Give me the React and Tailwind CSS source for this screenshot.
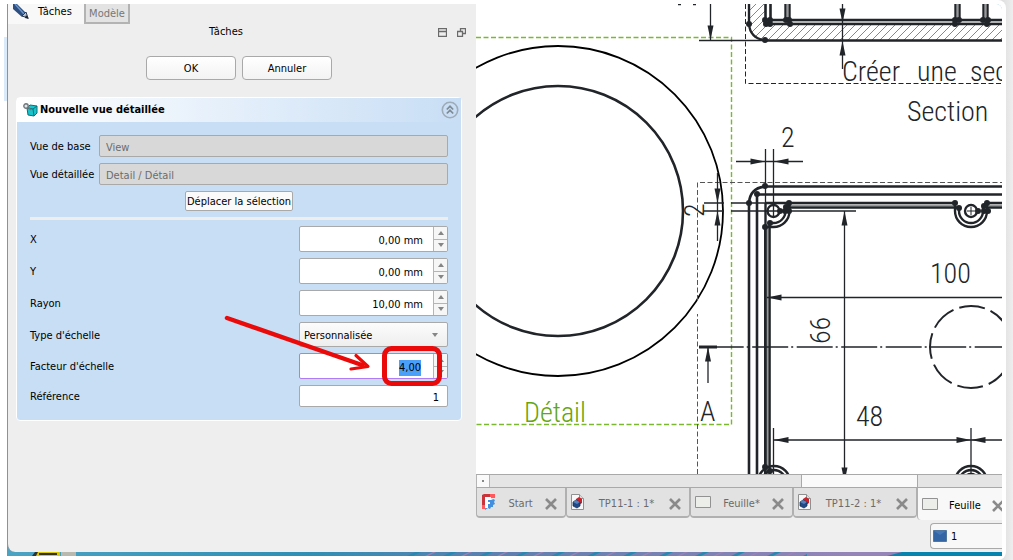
import React, { useEffect, useRef, useState } from "react";

const INK = "#212529";

const PencilIcon = () => (
  <svg width="18" height="18" viewBox="0 0 18 18" aria-hidden="true">
    <path d="M1 0 5 0 14 9 10 13 1 5Z" fill="#2d4f80" />
    <path d="M3 0 12 10" stroke="#6d94c8" strokeWidth="1.500" />
    <path d="M14 8 16 14 10 12Z" fill="#b9c3cf" stroke="#2a3950" />
    <path d="M14 11 17 15 13 14Z" fill="#16202e" />
  </svg>
);

const DetailCubeIcon = () => (
  <svg width="15" height="14" viewBox="0 0 15 14" aria-hidden="true">
    <path d="M4 5 7 2 14 3 14 10 11 13 5 12Z" fill="#16c4cc" stroke="#0b6f78" />
    <path d="M4 5 10 6 14 3M10 6 11 13" fill="none" stroke="#0b6f78" />
    <circle cx="3" cy="3" r="2.200" fill="#dfe6ea" stroke="#6f777c" strokeWidth="1.400" />
    <path d="M5 4 8 7" stroke="#6f777c" strokeWidth="1.500" />
  </svg>
);

const CollapseIcon = () => (
  <svg width="18" height="18" viewBox="0 0 18 18" fill="none" aria-hidden="true">
    <circle cx="9" cy="9" r="7.700" stroke="#9eabb8" strokeWidth="1.600" />
    <path d="M5.800 8.500 9 5.300l3.200 3.200M5.800 12.500 9 9.300l3.200 3.200" stroke="#7e8a96" strokeWidth="1.700" />
  </svg>
);

const DockIcon = () => (
  <svg width="9" height="9" viewBox="0 0 9 9" fill="none" stroke="#6a6a6a" strokeWidth="1.300" aria-hidden="true">
    <path d="M.5 .5h8v8h-8zM1 3.500h7" />
  </svg>
);

const FloatIcon = () => (
  <svg width="9" height="9" viewBox="0 0 9 9" fill="none" stroke="#6a6a6a" strokeWidth="1.300" aria-hidden="true">
    <path d="M.5 3.500h5v5h-5zM3.500 3V.5h5v5H6" />
  </svg>
);

const FreeCadIcon = () => (
  <svg width="15" height="16" viewBox="0 0 15 16" aria-hidden="true">
    <path d="M6 6h5l1-1 2 1-1 2 1 2-2 1 0 2-2 0-1 2-2-1-3 2V7z" fill="#418fde" />
    <path d="M1 1 3 0h6v4H5v11H1z" fill="#cb333b" />
    <path d="M9 0h5v4H9z" fill="#ff585d" />
    <path d="M1 11h4v4H1z" fill="#ff585d" />
    <path d="M4 3h6v3H7v2h2v2H7v4H4z" fill="#fff" />
  </svg>
);

const PartIcon = () => (
  <svg width="13" height="17" viewBox="0 0 13 17" aria-hidden="true">
    <path d="M.5 .5h8l4 4v11h-12z" fill="#f8f8f8" stroke="#909090" />
    <path d="M8.500 .5v4h4" fill="#ddd" stroke="#909090" />
    <path d="M5 5 8 3l3 2v4l-3 2-3-2z" fill="#cf2027" />
    <path d="M2 8l3-2 4 2v4l-3 2-4-2z" fill="#204a87" stroke="#12294c" strokeWidth=".7" />
    <path d="M2 8l4 2 3-2-4-2z" fill="#5580bd" />
  </svg>
);

const PageIcon = () => (
  <svg width="16" height="12" viewBox="0 0 16 12" aria-hidden="true">
    <path d="M.5 .5h15v11H.5z" fill="#eceeea" stroke="#929292" />
  </svg>
);

const CloseIcon = () => (
  <svg width="12" height="12" viewBox="0 0 12 12" aria-hidden="true">
    <path d="M1 1l10 10M11 1 1 11" stroke="#8a8a8a" strokeWidth="2.600" />
  </svg>
);

const StepArrow = ({ up }) => (
  <svg width="6" height="4" viewBox="0 0 6 4" aria-hidden="true">
    <path d={up ? "M0 4 3 0 6 4Z" : "M0 0 3 4 6 0Z"} fill="#858585" />
  </svg>
);

const SpinBox = ({ id, initial, active }) => {
  const [value, setValue] = useState(initial);
  const ref = useRef(null);

  useEffect(() => {
    if (active) {
      ref.current.focus();
      ref.current.select();
    }
  }, [active]);

  const step = (delta) => {
    const unit = value.includes("mm") ? " mm" : "";
    const next = (parseFloat(value.replace(",", ".")) || 0) + delta;
    setValue(next.toFixed(2).replace(".", ",") + unit);
  };

  return (
    <div
      className={`flex h-[26px] w-[149px] overflow-hidden rounded-xs border bg-white ${
        active ? "border-[#b07cf5]" : "border-[#a9a9a9]"
      }`}
    >
      <input
        id={id}
        ref={ref}
        value={value}
        onChange={(e) => setValue(e.target.value)}
        className={`min-w-0 flex-1 bg-transparent pt-1 text-right outline-none selection:bg-[#4a9ff8] selection:text-black ${
          active ? "pr-3" : "pr-2.5"
        }`}
      />
      <div className="flex w-3.5 flex-col border-l border-[#b5b5b5] bg-[#f6f6f6]">
        <button type="button" aria-label="+" onClick={() => step(1)} className="flex flex-1 items-center justify-center border-b border-[#b5b5b5]">
          <StepArrow up />
        </button>
        <button type="button" aria-label="-" onClick={() => step(-1)} className="flex flex-1 items-center justify-center">
          <StepArrow />
        </button>
      </div>
    </div>
  );
};

const Row = ({ id, label, children }) => (
  <div className="flex items-center justify-between">
    <label htmlFor={id} className="pt-0.5">{label}</label>
    {children}
  </div>
);

const ReadOnlyRow = ({ id, label, value }) => (
  <div className="flex items-center">
    <label htmlFor={id} className="w-[69px] shrink-0 pt-0.5 whitespace-nowrap">{label}</label>
    <input
      id={id}
      defaultValue={value}
      disabled
      className="h-[22px] min-w-0 flex-1 rounded-xs border border-[#a9a9a9] bg-[#d8d8d8] px-1.5 pt-0.5 text-[#6c6c6c]"
    />
  </div>
);

const TaskPanel = () => (
  <aside className="w-[468px] shrink-0 bg-[#eeeeee]">
    <div className="flex h-5 items-start">
      <button type="button" className="flex h-5 w-[76px] items-start gap-2 overflow-hidden bg-[#f8f8f8] pl-1">
        <PencilIcon />
        <span className="leading-4">Tâches</span>
      </button>
      <button type="button" className="h-5 w-[46px] border-x-2 border-b-2 border-[#b3b3b3] bg-[#e3e3e3] pt-0.5 leading-4 text-[#777]">
        Modèle
      </button>
    </div>
    <div className="flex h-4 items-center pr-2.5">
      <h2 className="flex-1 pl-1.5 text-center">Tâches</h2>
      <div className="flex gap-2.5">
        <button type="button" aria-label="Ancrer"><DockIcon /></button>
        <button type="button" aria-label="Détacher"><FloatIcon /></button>
      </div>
    </div>
    <div className="mt-4 flex justify-center gap-1.5 pr-1.5">
      <button type="button" className="h-6 w-[90px] rounded-sm border border-[#a9a9a9] bg-linear-to-b from-white to-[#f3f3f3] pt-0.5">OK</button>
      <button type="button" className="h-6 w-[90px] rounded-sm border border-[#a9a9a9] bg-linear-to-b from-white to-[#f3f3f3] pt-0.5">Annuler</button>
    </div>
    <section className="mt-[17px] mr-3.5 ml-2 rounded-sm border border-white bg-[#c8def5]">
      <header className="flex h-6 items-center gap-0.5 bg-linear-to-r from-white to-[#c8def5] pr-0.5 pl-1.5">
        <DetailCubeIcon />
        <h3 className="flex-1 font-bold">Nouvelle vue détaillée</h3>
        <button type="button" aria-label="Réduire"><CollapseIcon /></button>
      </header>
      <form className="relative flex flex-col gap-1.5 p-[13px]">
        <ReadOnlyRow id="base" label="Vue de base" value="View" />
        <ReadOnlyRow id="detail" label="Vue détaillée" value="Detail / Détail" />
        <button type="button" className="h-5 self-center rounded-xs border border-[#a9a9a9] bg-[#fafafa] px-px pt-px">
          Déplacer la sélection
        </button>
        <hr className="h-[3px] border-0 bg-[#eeeeee]" />
        <Row id="x" label="X"><SpinBox id="x" initial="0,00 mm" /></Row>
        <Row id="y" label="Y"><SpinBox id="y" initial="0,00 mm" /></Row>
        <Row id="rayon" label="Rayon"><SpinBox id="rayon" initial="10,00 mm" /></Row>
        <Row id="type" label="Type d'échelle">
          <div className="relative">
            <select
              id="type"
              className="block h-[25px] w-[149px] appearance-none rounded-xs border border-[#a9a9a9] bg-linear-to-b from-[#fcfcfc] to-[#eeeeee] px-1 pt-0.5"
            >
              <option>Personnalisée</option>
              <option>Page</option>
              <option>Automatique</option>
            </select>
            <span className="pointer-events-none absolute inset-y-0 right-2.5 flex items-center"><StepArrow /></span>
          </div>
        </Row>
        <Row id="facteur" label="Facteur d'échelle"><SpinBox id="facteur" initial="4,00" active /></Row>
        <Row id="ref" label="Référence">
          <input
            id="ref"
            defaultValue="1"
            className="h-[22px] w-[149px] rounded-xs border border-[#a9a9a9] bg-white px-2 pt-0.5 text-right outline-none"
          />
        </Row>
        {/* red arrow and frame around the scale factor */}
        <svg className="pointer-events-none absolute top-0 right-0 h-full w-[444px] overflow-visible" fill="none" stroke="#ea0a0a" aria-hidden="true">
          <g transform="translate(-17 -122)">
            <path d="M227 318 362 365" strokeWidth="4.500" strokeLinecap="round" />
            <path d="M356 355.500 368 366.500 351 369" strokeWidth="3.200" strokeLinecap="round" strokeLinejoin="round" />
            <rect x="384.500" y="348.500" width="55" height="35" rx="7" strokeWidth="5" />
          </g>
        </svg>
      </form>
    </section>
  </aside>
);

const rotations = { down: 0, left: 90, up: 180, right: 270 };

// filled dimension arrow, tip at x,y
const Tip = ({ x, y, dir }) => (
  <path d="M0 0-3-14.500H3Z" fill={INK} stroke="none" transform={`translate(${x} ${y}) rotate(${rotations[dir]})`} />
);

const vertices = [
  [749, 24], [765, 40], [765, 20], [766, 24], [770, 20], [770, 24], [786, 20], [789, 20], [790, 24],
  [955, 24], [955, 20], [959, 20], [983, 20], [987, 24], [988, 20],
  [765, 186], [757, 194], [749, 203], [789, 203], [786, 207], [789, 211], [780, 211], [785, 211],
  [765, 227], [770, 223], [955, 203], [959, 208], [978, 211], [984, 211], [988, 211], [987, 203], [984, 206],
  [765, 467], [770, 471],
];

const Drawing = () => (
  <svg className="min-h-[470px] w-full flex-1 bg-white" fill="none" stroke={INK} role="img" aria-label="Mise en plan">
    <defs>
      <pattern id="hatch" width="8" height="8" patternUnits="userSpaceOnUse">
        <path d="M-1 9 9-1M-1 1 1-1M7 9 9 7" stroke="#555" strokeWidth=".7" />
      </pattern>
    </defs>
    <g transform="translate(-476 -4)">
      {/* detail view */}
      <circle cx="558" cy="211" r="165" stroke="#000" strokeWidth="1.800" />
      <circle cx="558" cy="211" r="125" strokeWidth="2.600" />
      <path d="M476 37.500H731.500V424.500H476" stroke="#7cb82f" strokeDasharray="5 2.500" strokeWidth="1.400" />

      {/* frames */}
      <path d="M745.500 4V83.500H1600" strokeDasharray="5 2.500" />
      <path d="M697.500 474V314M697.500 300V182.500H1600" stroke="#555" strokeDasharray="5 2.500" />

      {/* section */}
      <path d="M749 0H765V24H1600V40H765Q749 40 749 24Z" fill="url(#hatch)" stroke="none" />
      <path d="M749 0V24Q750 38 765 40.500H1600" strokeWidth="2.400" />
      <path d="M765.500 0V22M770.500 0V22M766 20H1600M766 24H1600" strokeWidth="2.600" />
      <path d="M785.500 0V20M789.500 0V20M955.500 0V20M959.500 0V20M983.500 0V20M987.500 0V20" strokeWidth="2.400" />
      <path d="M787.500 0V20M957.500 0V20M985.500 0V20" stroke="#999" strokeWidth="1.500" />
      <path d="M766 22H1600" stroke="#999" strokeWidth="1" />
      <path d="M699 40.500H765M710.500 4V40M842.500 4V69" strokeWidth="1.300" />
      <path d="M678 4.500H681M693 4.500H696" strokeWidth="1.500" />
      <Tip x={710.5} y={40} dir="down" />
      <Tip x={842.5} y={23} dir="down" />
      <Tip x={842.5} y={41} dir="up" />

      {/* top view */}
      <path d="M1600 186.500H765Q750 188 749 203V480" strokeWidth="2.600" />
      <path d="M1600 194.500H757V480" strokeWidth="2.600" />
      <path d="M765.500 227V480" strokeWidth="3" />
      <path d="M769.500 223V480M765 203H955M790 207.500H957M987 203H1600M987 207.500H1600" strokeWidth="2.600" />
      <path d="M789 205.300H956M987 205.300H1600M767.500 227V480" stroke="#999" strokeWidth="1.500" />

      {/* screw bosses */}
      <g strokeWidth="2.400">
        <path d="M765.500 203V227" />
        <circle cx="773.500" cy="211" r="6" />
        <path d="M765 227H773.500A16 16 0 0 0 789.500 211V203M770 223H773.500A12 12 0 0 0 785.500 211L789 203" />
        <circle cx="971" cy="211" r="6" />
        <path d="M955 203V211A16 16 0 0 0 987 211V203M959 207V211A12 12 0 0 0 983 211V207" />
        <circle cx="774" cy="482" r="16" />
        <circle cx="774" cy="482" r="12" />
        <circle cx="774" cy="482" r="6" />
        <circle cx="971" cy="482" r="16" />
        <circle cx="971" cy="482" r="12" />
        <circle cx="971" cy="482" r="8" />
      </g>
      <path d="M971 207V215M967 211H975" />
      {vertices.map(([x, y]) => (
        <circle key={`${x}-${y}`} cx={x} cy={y} r="3" fill={INK} stroke="none" />
      ))}

      {/* dimensions */}
      <g strokeWidth="1.300">
        <path d="M765.500 149V203M773.500 149V217M736 161.500H803" />
        <path d="M704 203H724M731 203H765M704 211H724M731 211H856M717.500 173V241" />
        <path d="M844.500 211V474M767 297.500H1600M773 440H1600M708 348V383" />
        <path d="M773.500 428V474M971 428V474" />
      </g>
      <path d="M707.700 347H1600" strokeDasharray="36 3 2 3.500" strokeWidth="1.500" />
      <path d="M699 347H717" strokeWidth="3" />
      <circle cx="971" cy="347" r="41" strokeWidth="2" strokeDasharray="26 6.200" strokeDashoffset="-20" />
      <Tip x={765} y={161.5} dir="right" />
      <Tip x={774} y={161.5} dir="left" />
      <Tip x={717.5} y={203} dir="down" />
      <Tip x={717.5} y={211} dir="up" />
      <Tip x={844.5} y={211} dir="up" />
      <Tip x={844.5} y={482} dir="down" />
      <Tip x={767} y={297.5} dir="left" />
      <Tip x={708} y={347} dir="up" />
      <Tip x={774} y={440} dir="left" />
      <Tip x={971} y={440} dir="right" />
      <Tip x={971} y={440} dir="left" />

      <g className="font-['Roboto_Condensed','Roboto',sans-serif] text-[28px] font-light" fill={INK} stroke="none">
        <text y="81">
          <tspan x="842">Créer </tspan>
          <tspan x="917">une </tspan>
          <tspan x="970">sec</tspan>
        </text>
        <text x="907" y="121">Section</text>
        <text x="781" y="147">2</text>
        <text x="930" y="283">100</text>
        <text x="856" y="426">48</text>
        <text x="700" y="421">A</text>
        <text transform="translate(830 344) rotate(-90)">66</text>
        <text transform="translate(704 217) rotate(-90)">2</text>
        <text x="524" y="422" fill="#64a512">Détail</text>
      </g>
    </g>
  </svg>
);

const tabs = [
  { name: "Start", icon: FreeCadIcon, size: "w-[90px]" },
  { name: "TP11-1 : 1*", icon: PartIcon, size: "w-[124px]" },
  { name: "Feuille*", icon: PageIcon, size: "w-[103px]" },
  { name: "TP11-2 : 1*", icon: PartIcon, size: "w-[124px]" },
  { name: "Feuille", icon: PageIcon, size: "w-[93px]", active: true },
];

const DocumentTabs = () => (
  <nav className="flex h-8 items-start overflow-hidden">
    {tabs.map(({ name, icon: TabIcon, size, active }) => (
      <div
        key={name}
        className={`flex shrink-0 items-center gap-1 rounded-b-sm border-[#b0b0b0] pl-1 ${size} ${
          active ? "h-8 border-l bg-[#f8f8f8] pr-1.5" : "h-[30px] border-x border-b-2 bg-[#e2e2e2] pr-2 text-[#6b6b6b]"
        }`}
      >
        <TabIcon />
        <button type="button" className="flex-1 pt-1 text-center whitespace-nowrap">{name}</button>
        <button type="button" aria-label={`Fermer ${name}`} className="pt-1"><CloseIcon /></button>
      </div>
    ))}
  </nav>
);

const Wallpaper = () => (
  <svg className="h-1 w-full" aria-hidden="true">
    <defs>
      <linearGradient id="sky">
        <stop offset="0" stopColor="#4ba3c4" />
        <stop offset=".3" stopColor="#2f8fb4" />
        <stop offset=".5" stopColor="#5f7fb0" />
        <stop offset=".85" stopColor="#9584b8" />
      </linearGradient>
      <pattern id="waves" width="36" height="4" patternUnits="userSpaceOnUse">
        <path d="M4 4 12 0H18L10 4Z" fill="#2888b0" />
        <path d="M22 4 30 0H33L25 4Z" fill="#9a82b4" />
      </pattern>
    </defs>
    <rect width="100%" height="4" fill="url(#sky)" />
    <rect x="400" width="400" height="4" fill="url(#waves)" />
    <path d="M880 4 895 0H1600V4Z" fill="#0784ad" />
    <path d="M26 4 29 0H53V4Z" fill="#d9c800" />
    <path d="M25 4 28 0H31L29 4ZM32 1H50V3H32Z" fill="#33322a" />
    <path d="M54 0H69V4H54Z" fill="#b9b9b0" />
  </svg>
);

const App = () => (
  <div className="min-h-screen bg-linear-to-r from-[#e0e0e0] from-99% to-[#eeeeee] pr-[7px] font-['DejaVu_Sans_Condensed','DejaVu_Sans',sans-serif] text-[11px] leading-4 text-black">
    <div className="flex min-h-screen rounded-r-lg bg-white p-1">
      <div className="mt-[33px] h-16 w-[3px] bg-[#dbeafb]" />
      <div className="flex min-w-0 flex-1 flex-col overflow-hidden rounded-tr-md bg-[#4ba3c4]">
        <div className="flex flex-1 flex-col overflow-hidden rounded-bl-lg border-l border-[#8d9299] bg-[#efefef]">
          <div className="flex flex-1">
            <TaskPanel />
            <main className="flex min-w-0 flex-1 flex-col">
              <Drawing />
              <div className="flex h-3.5 border-y border-[#a9a9a9] bg-[#e5e5e5]">
                <button type="button" aria-label="Défiler à gauche" className="flex w-3.5 items-center justify-center border-x border-[#b5b5b5] bg-[#fafafa]">
                  <span className="size-0.5 bg-[#888]" />
                </button>
                <div className="flex-1" />
                <div className="w-[117px] border-x border-[#a9a9a9] bg-[#fafafa]" />
                <div className="w-[84px]" />
              </div>
              <DocumentTabs />
            </main>
          </div>
          <footer className="flex h-8 items-center justify-end">
            <button type="button" className="flex h-[26px] w-[72px] items-center gap-1 rounded-l-sm border border-r-0 border-[#a9a9a9] bg-[#f8f8f8] pl-0.5">
              <svg width="14" height="12" viewBox="0 0 14 12" aria-hidden="true">
                <path d="M.5 .5h13v11H.5z" fill="#3465a4" stroke="#51779f" />
                <path d="M1 1 7 5 13 1" fill="#4677b7" />
              </svg>
              <span className="pt-0.5">1</span>
            </button>
          </footer>
        </div>
        <Wallpaper />
      </div>
    </div>
  </div>
);

export default App;
